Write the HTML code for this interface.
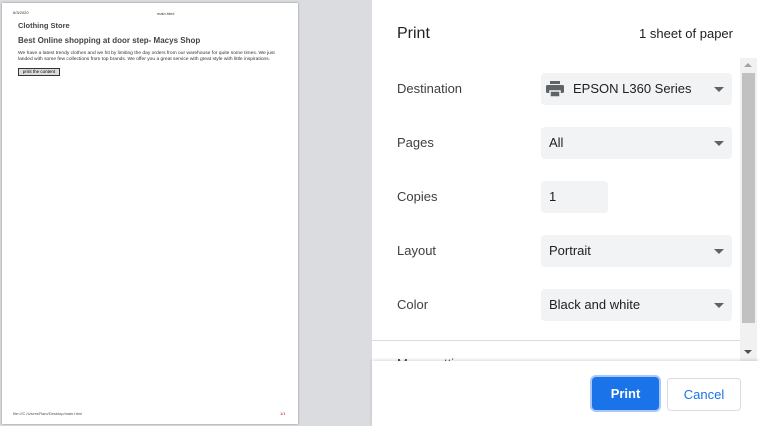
<!DOCTYPE html>
<html><head><style>
body{margin:0;width:759px;height:426px;overflow:hidden;background:#dadce0;font-family:"Liberation Sans",Arial,sans-serif;position:relative}
.page{position:absolute;left:2px;top:3px;width:296px;height:421px;background:#fff;box-shadow:0 0 2px #888}
.page *{position:absolute;margin:0}
.panel{position:absolute;left:372px;top:0;width:387px;height:426px;background:#fff}
.lbl{position:absolute;left:25px;font-size:13px;color:#3c4043}
.sel{position:absolute;left:169px;width:191px;height:32px;background:#f1f3f4;border-radius:4px;font-size:13px;color:#202124;line-height:32px;box-sizing:border-box;padding-left:8px}
.arr{position:absolute;right:8px;top:14px;width:0;height:0;border-left:5px solid transparent;border-right:5px solid transparent;border-top:5px solid #5f6368}
</style></head><body>
<div class="page">
<div style="left:11px;top:7px;font-size:4px;color:#333">6/3/2020</div>
<div style="left:155px;top:8px;font-size:4px;color:#333">main.html</div>
<div style="left:16px;top:18px;font-size:7.5px;font-weight:bold;color:#444">Clothing Store</div>
<div style="left:16px;top:33px;font-size:8px;font-weight:bold;color:#444">Best Online shopping at door step- Macys Shop</div>
<div style="left:16px;top:48px;width:268px;font-size:4.9px;line-height:6px;color:#333">We have a latest trendy clothes and we hit by limiting the day orders from our warehouse for quite some times. We just landed with some few collections from top brands. We offer you a great service with great style with little inspirations.</div>
<div style="left:16px;top:65px;width:40px;height:6px;border:1px solid #333;background:#ddd;font-size:4.5px;line-height:6px;text-align:center">print the content</div>
<div style="left:11px;top:408px;font-size:4px;color:#555">file:///C:/Users/Ram/Desktop/main.html</div>
<div style="left:278px;top:408px;font-size:4px;color:#c00">1/1</div>
</div>
<div class="panel">
<div style="position:absolute;left:25px;top:25px;font-size:16px;color:#202124">Print</div>
<div style="position:absolute;right:26px;top:26px;font-size:13px;color:#202124">1 sheet of paper</div>
<div class="lbl" style="top:81px">Destination</div>
<div class="sel" style="top:73px;padding-left:32px"><svg style="position:absolute;left:5px;top:8px" width="18" height="16" viewBox="0 0 18 16"><rect x="4" y="0" width="10" height="3" fill="#5f6368"/><rect x="0" y="4" width="18" height="8" rx="1.5" fill="#5f6368"/><rect x="4" y="10" width="10" height="6" fill="#5f6368" stroke="#f1f3f4" stroke-width="1.5"/></svg>EPSON L360 Series<div class="arr"></div></div>
<div class="lbl" style="top:135px">Pages</div>
<div class="sel" style="top:127px">All<div class="arr"></div></div>
<div class="lbl" style="top:189px">Copies</div>
<div class="sel" style="top:181px;width:67px">1</div>
<div class="lbl" style="top:243px">Layout</div>
<div class="sel" style="top:235px">Portrait<div class="arr"></div></div>
<div class="lbl" style="top:297px">Color</div>
<div class="sel" style="top:289px">Black and white<div class="arr"></div></div>
<div style="position:absolute;left:0;top:340px;width:368px;height:1px;background:#dadce0"></div>
<div class="lbl" style="top:356px">More settings</div>
<div style="position:absolute;left:368px;top:58px;width:17px;height:303px;background:#f1f1f1">
<div style="position:absolute;left:4px;top:5px;border-left:4px solid transparent;border-right:4px solid transparent;border-bottom:4px solid #a3a3a3"></div>
<div style="position:absolute;left:2px;top:15px;width:13px;height:250px;background:#c1c1c1"></div>
<div style="position:absolute;left:4px;top:292px;border-left:4px solid transparent;border-right:4px solid transparent;border-top:4px solid #505050"></div>
</div>
<div style="position:absolute;left:0;top:361px;width:387px;height:65px;background:#fff;box-shadow:0 -1px 3px rgba(0,0,0,.15)"></div>
<div style="position:absolute;left:220px;top:377px;width:67px;height:33px;background:#1a73e8;border-radius:4px;box-shadow:0 0 0 2px #a8c7fa;color:#fff;font-size:13px;font-weight:bold;line-height:33px;text-align:center">Print</div>
<div style="position:absolute;left:295px;top:378px;width:72px;height:31px;border:1px solid #dadce0;border-radius:4px;color:#1a73e8;font-size:13px;line-height:31px;text-align:center">Cancel</div>
</div>
</body></html>
